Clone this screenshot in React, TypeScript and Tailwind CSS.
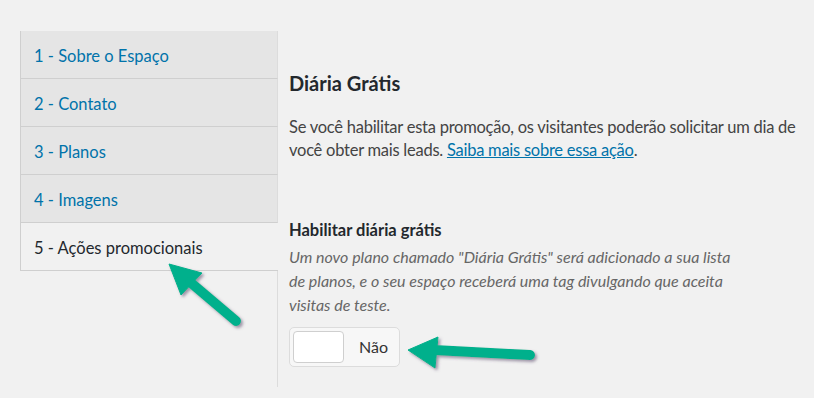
import React from 'react';

const tabs = [
  { label: '1 - Sobre o Espaço', active: false },
  { label: '2 - Contato', active: false },
  { label: '3 - Planos', active: false },
  { label: '4 - Imagens', active: false },
  { label: '5 - Ações promocionais', active: true },
];

const font = { fontFamily: '"Segoe UI", Lato, "Noto Sans", Arial, sans-serif' };

export default function App() {
  return (
    <div
      className="relative w-[814px] h-[398px] overflow-hidden bg-[#f1f1f1] pt-[31px] pl-[20px] flex"
      style={font}
    >
      {/* Tabs */}
      <div className="w-[258px] shrink-0 flex flex-col">
        {tabs.map((tab) => (
          <div
            key={tab.label}
            className={`h-[48px] box-border flex items-center pl-[13px] pt-[3px] text-[16.5px] border-b border-l border-[#cfcfcf] ${
              tab.active
                ? 'bg-[#f1f1f1] text-[#23282d]'
                : 'bg-[#e5e5e5] text-[#0073aa] border-r border-r-[#dcdcdc]'
            }`}
          >
            {tab.label}
          </div>
        ))}
        <div className="h-[116px] border-r border-[#dcdcdc]" />
      </div>

      {/* Content */}
      <div className="pl-[11px] flex flex-col min-w-0">
        <h2 className="mt-[37px] text-[20px] leading-[30px] font-bold text-[#23282d] whitespace-nowrap">
          Diária Grátis
        </h2>
        <p className="mt-[18px] text-[16.5px] tracking-[-0.25px] leading-[23px] text-[#444] whitespace-nowrap">
          Se você habilitar esta promoção, os visitantes poderão solicitar um dia de
          <br />
          você obter mais leads.{' '}
          <a className="text-[#0073aa] underline">Saiba mais sobre essa ação</a>.
        </p>

        <div className="mt-[57px] text-[16.5px] leading-[22px] font-bold text-[#23282d]">
          Habilitar diária grátis
        </div>
        <p className="mt-[4px] text-[16px] leading-[24px] italic text-[#666] whitespace-nowrap">
          Um novo plano chamado "Diária Grátis" será adicionado a sua lista
          <br />
          de planos, e o seu espaço receberá uma tag divulgando que aceita
          <br />
          visitas de teste.
        </p>

        <div className="mt-[10px] w-[111px] h-[40px] box-border rounded-[5px] border border-[#dcdcdc] bg-[#f7f7f7] flex items-center pl-[3px]">
          <div className="w-[51px] h-[32px] box-border rounded-[4px] border border-[#cfcfcf] bg-white" />
          <span className="ml-[15px] text-[16px] text-[#333]">Não</span>
        </div>
      </div>

      {/* Annotation arrows */}
      <svg className="absolute left-0 top-0 pointer-events-none" width="814" height="398" viewBox="0 0 814 398">
        <defs>
          <filter id="sh" x="-20%" y="-20%" width="140%" height="140%">
            <feDropShadow dx="2" dy="2" stdDeviation="1.6" floodColor="#5a4a6a" floodOpacity="0.55" />
          </filter>
        </defs>
        <g filter="url(#sh)" fill="#03b08c" stroke="#03b08c">
          <polygon points="169,264 202,273 181,295" strokeWidth="1" strokeLinejoin="round" />
          <line x1="190" y1="282" x2="236" y2="321" strokeWidth="10" strokeLinecap="round" />
        </g>
        <g filter="url(#sh)" fill="#03b08c" stroke="#03b08c">
          <polygon points="408,350 438,337 435,368" strokeWidth="1" strokeLinejoin="round" />
          <line x1="434" y1="350" x2="530" y2="355" strokeWidth="10" strokeLinecap="round" />
        </g>
      </svg>
    </div>
  );
}
